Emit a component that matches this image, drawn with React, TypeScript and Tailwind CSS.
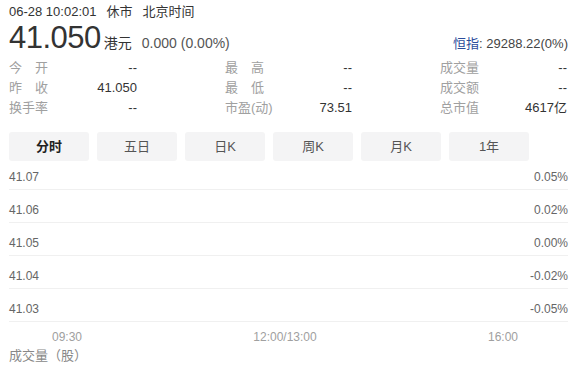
import React from "react";

const font = { fontFamily: '"Liberation Sans", Arial, "Noto Sans CJK SC", sans-serif' };

const stats: [string, string][][] = [
  [
    ["今　开", "--"],
    ["最　高", "--"],
    ["成交量", "--"],
  ],
  [
    ["昨　收", "41.050"],
    ["最　低", "--"],
    ["成交额", "--"],
  ],
  [
    ["换手率", "--"],
    ["市盈(动)", "73.51"],
    ["总市值", "4617亿"],
  ],
];

const tabs = ["分时", "五日", "日K", "周K", "月K", "1年"];

const rows = [
  ["41.07", "0.05%"],
  ["41.06", "0.02%"],
  ["41.05", "0.00%"],
  ["41.04", "-0.02%"],
  ["41.03", "-0.05%"],
];

export default function App() {
  return (
    <div className="min-h-screen bg-white">
      <div className="ml-[9px] w-[559px] text-[#333]" style={font}>
        {/* header */}
        <div className="pt-[3px] text-[13px] leading-[18px]">
          06-28 10:02:01<span className="ml-[10px]">休市</span>
          <span className="ml-[10px]">北京时间</span>
        </div>
        <div className="flex h-[34px] items-baseline justify-between">
          <div className="flex items-baseline">
            <span className="text-[31px] leading-[34px] tracking-[-0.5px]">41.050</span>
            <span className="ml-[3px] text-[14px]">港元</span>
            <span className="ml-[10px] text-[14px] text-[#555]">0.000 (0.00%)</span>
          </div>
          <div className="text-[13px]">
            <span className="text-[#2b4c9b]">恒指</span>
            <span className="text-[#444]">: 29288.22(0%)</span>
          </div>
        </div>

        {/* stats */}
        <div className="mt-[3px]">
          {stats.map((row, i) => (
            <div key={i} className="grid h-[20px] grid-cols-[128px_127px_127px] gap-x-[88px] text-[13px] leading-[20px]">
              {row.map(([label, value]) => (
                <div key={label} className="flex justify-between">
                  <span className="text-[#a0a0a0]">{label}</span>
                  <span className="text-[#333]">{value}</span>
                </div>
              ))}
            </div>
          ))}
        </div>

        {/* tabs */}
        <div className="mt-[14px] flex gap-[8px]">
          {tabs.map((t, i) => (
            <div
              key={t}
              className={`flex h-[29px] w-[80px] items-center justify-center rounded-[3px] bg-[#f4f4f5] text-[13px] ${
                i === 0 ? "font-bold text-[#222]" : "text-[#555]"
              }`}
            >
              {t}
            </div>
          ))}
        </div>

        {/* chart */}
        <div>
          {rows.map(([l, r], i) => (
            <div
              key={l}
              className={`flex items-end justify-between border-b border-[#f0f0f0] pb-[4px] text-[12px] leading-4 text-[#666] ${
                i === 0 ? "h-[29px]" : "h-[33px]"
              }`}
            >
              <span>{l}</span>
              <span>{r}</span>
            </div>
          ))}
        </div>
        <div className="ml-[43px] flex w-[466px] justify-between pt-[7px] text-[12px] leading-4 text-[#a0a0a0]">
          <span>09:30</span>
          <span>12:00/13:00</span>
          <span>16:00</span>
        </div>
        <div className="pt-[2px] text-[13px] leading-[18px] text-[#888]">成交量（股）</div>
      </div>
    </div>
  );
}
